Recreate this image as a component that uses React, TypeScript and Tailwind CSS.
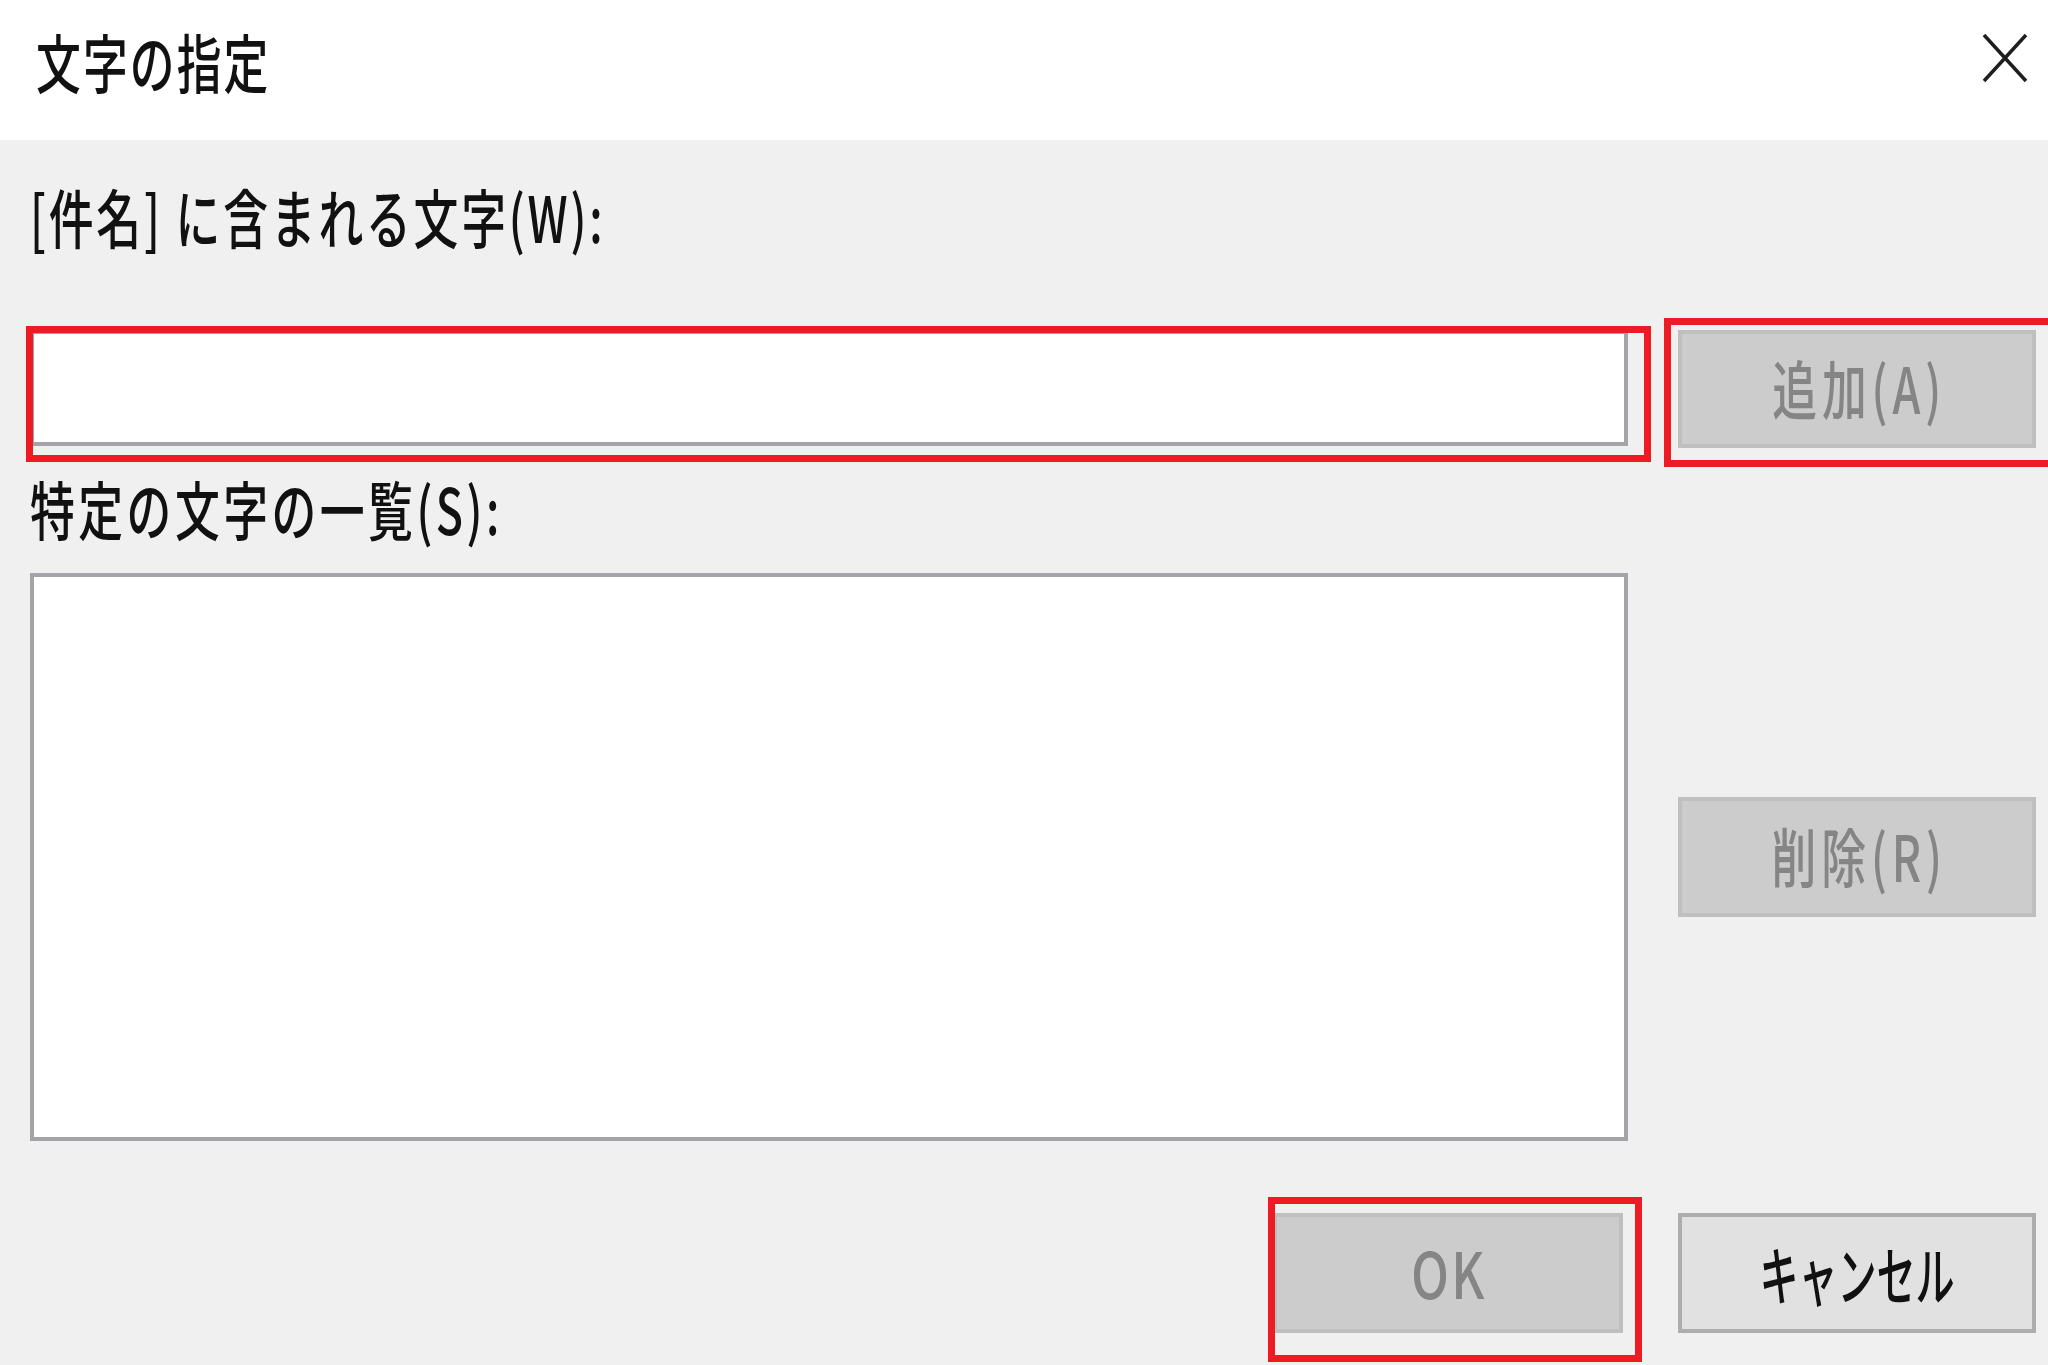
import React from "react";

// Tall, narrow UI font look: Noto Sans CJK JP squeezed horizontally
function Narrow({ children, className = "" }: { children: React.ReactNode; className?: string }) {
    return (
        <span className={`inline-block whitespace-nowrap text-[64px] font-medium leading-none ${className}`}>
            {children}
        </span>
    );
}

function RedMark({ className }: { className: string }) {
    return <div className={`pointer-events-none absolute border-[7px] border-[#ed1c24] ${className}`} />;
}

export default function App() {
    return (
        <div className="w-[2048px] h-[1365px] overflow-hidden bg-[#f0f0f0] flex flex-col font-['Noto_Sans_CJK_JP','Noto_Sans',sans-serif] text-[#111]">
            {/* Title bar */}
            <div className="h-[140px] shrink-0 bg-white flex items-start justify-between">
                <div className="pl-[36px] pt-[28px]">
                    <Narrow className="origin-left scale-x-[0.7] tracking-[3px]">文字の指定</Narrow>
                </div>
                <div className="pt-[33px] pr-[20px]">
                    <svg width="46" height="50" viewBox="0 0 46 50">
                        <path d="M2 2 L44 48 M44 2 L2 48" stroke="#1e1e1e" strokeWidth="3.5" fill="none" />
                    </svg>
                </div>
            </div>

            {/* Body */}
            <div className="flex flex-col pl-[30px] pr-[12px]">
                <div className="mt-[43px] h-[64px]">
                    <Narrow className="origin-left scale-x-[0.7] tracking-[4px]">[件名] に含まれる文字(W):</Narrow>
                </div>

                <div className="mt-[83px] flex items-start gap-[50px]">
                    <div className="relative flex-1 h-[116px] bg-white border-[4px] border-[#a3a3a8]">
                        <RedMark className="left-[-8px] top-[-8px] right-[-27px] bottom-[-20px]" />
                    </div>
                    <div className="relative w-[358px] h-[118px] pb-[6px] bg-[#cccccc] border-[4px] border-[#bfbfbf] flex items-center justify-center">
                        <Narrow className="origin-center scale-x-[0.7] tracking-[7px] pl-[7px] text-[#858585]">追加(A)</Narrow>
                        <RedMark className="left-[-18px] top-[-16px] right-[-60px] bottom-[-23px]" />
                    </div>
                </div>

                <div className="mt-[27px] h-[64px]">
                    <Narrow className="origin-left scale-x-[0.7] tracking-[5px]">特定の文字の一覧(S):</Narrow>
                </div>

                <div className="mt-[34px] flex items-center gap-[50px]">
                    <div className="flex-1 h-[568px] bg-white border-[4px] border-[#a3a3a8]" />
                    <div className="w-[358px] h-[120px] pb-[6px] bg-[#cccccc] border-[4px] border-[#bfbfbf] flex items-center justify-center">
                        <Narrow className="origin-center scale-x-[0.7] tracking-[7px] pl-[7px] text-[#858585]">削除(R)</Narrow>
                    </div>
                </div>

                <div className="mt-[72px] flex justify-end gap-[55px]">
                    <div className="relative w-[350px] h-[120px] pb-[4px] bg-[#cccccc] border-[4px] border-[#bfbfbf] flex items-center justify-center">
                        <Narrow className="origin-center scale-x-[0.78] tracking-[3px] pl-[3px] text-[#858585]">OK</Narrow>
                        <RedMark className="left-[-9px] top-[-20px] right-[-23px] bottom-[-33px]" />
                    </div>
                    <div className="w-[358px] h-[120px] pb-[2px] bg-[#e1e1e1] border-[4px] border-[#adadad] flex items-center justify-center">
                        <Narrow className="origin-center scale-x-[0.61]">キャンセル</Narrow>
                    </div>
                </div>
            </div>
        </div>
    );
}
